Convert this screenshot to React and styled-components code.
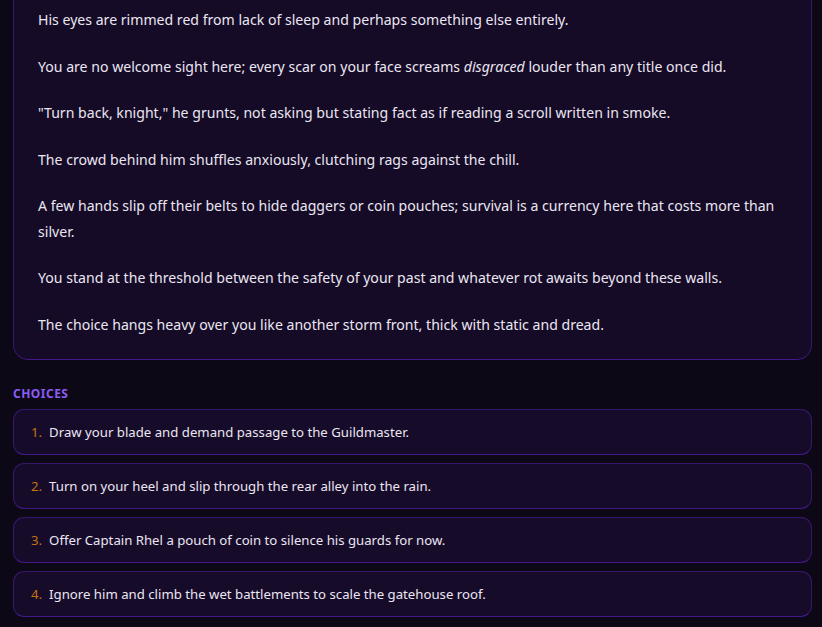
import React from "react";
import styled, { createGlobalStyle } from "styled-components";

const Global = createGlobalStyle`
  html, body { margin: 0; padding: 0; background: #0d0815; }
  body { font-family: "Noto Sans", "Open Sans", sans-serif; overflow: hidden; }
`;

const Page = styled.div`
  padding: 0 10px 40px 13px;
  height: 627px;
  box-sizing: border-box;
  overflow: hidden;
`;

const StoryCard = styled.section`
  margin-top: -40px;
  background: #150b26;
  border: 1px solid #36176e;
  border-top: none;
  border-bottom-color: #43198a;
  border-radius: 0 0 15px 15px;
  padding: 47px 24px 22px;
`;

const Para = styled.p`
  margin: 0 0 21px;
  color: #ebe6f2;
  font-size: 14.1px;
  line-height: 25.5px;
  &:last-child { margin-bottom: 0; }
  em { font-style: italic; }
`;

const Label = styled.h3`
  margin: 26px 0 7px;
  color: #8b5cf6;
  font-size: 12px;
  font-weight: 700;
  letter-spacing: 0.04em;
  text-transform: uppercase;
  line-height: 16px;
`;

const ChoiceList = styled.ol`
  list-style: none;
  margin: 0;
  padding: 0;
  display: flex;
  flex-direction: column;
  gap: 8px;
`;

const Choice = styled.li`
  display: flex;
  align-items: center;
  gap: 7px;
  height: 46px;
  box-sizing: border-box;
  padding: 0 17px;
  background: #170b2a;
  border: 1px solid #36176e;
  border-bottom-color: #43198a;
  border-radius: 11px;
  color: #ebe6f2;
  font-size: 13.2px;
`;

const Num = styled.span`
  color: #c2730f;
`;

const paragraphs = [
  "His eyes are rimmed red from lack of sleep and perhaps something else entirely.",
  <>You are no welcome sight here; every scar on your face screams <em>disgraced</em> louder than any title once did.</>,
  "\"Turn back, knight,\" he grunts, not asking but stating fact as if reading a scroll written in smoke.",
  "The crowd behind him shuffles anxiously, clutching rags against the chill.",
  "A few hands slip off their belts to hide daggers or coin pouches; survival is a currency here that costs more than silver.",
  "You stand at the threshold between the safety of your past and whatever rot awaits beyond these walls.",
  "The choice hangs heavy over you like another storm front, thick with static and dread.",
];

const choices = [
  "Draw your blade and demand passage to the Guildmaster.",
  "Turn on your heel and slip through the rear alley into the rain.",
  "Offer Captain Rhel a pouch of coin to silence his guards for now.",
  "Ignore him and climb the wet battlements to scale the gatehouse roof.",
];

export default function App() {
  return (
    <>
      <Global />
      <Page>
        <StoryCard>
          {paragraphs.map((p, i) => (
            <Para key={i}>{p}</Para>
          ))}
        </StoryCard>
        <Label>Choices</Label>
        <ChoiceList>
          {choices.map((c, i) => (
            <Choice key={i}>
              <Num>{i + 1}.</Num>
              <span>{c}</span>
            </Choice>
          ))}
        </ChoiceList>
      </Page>
    </>
  );
}
